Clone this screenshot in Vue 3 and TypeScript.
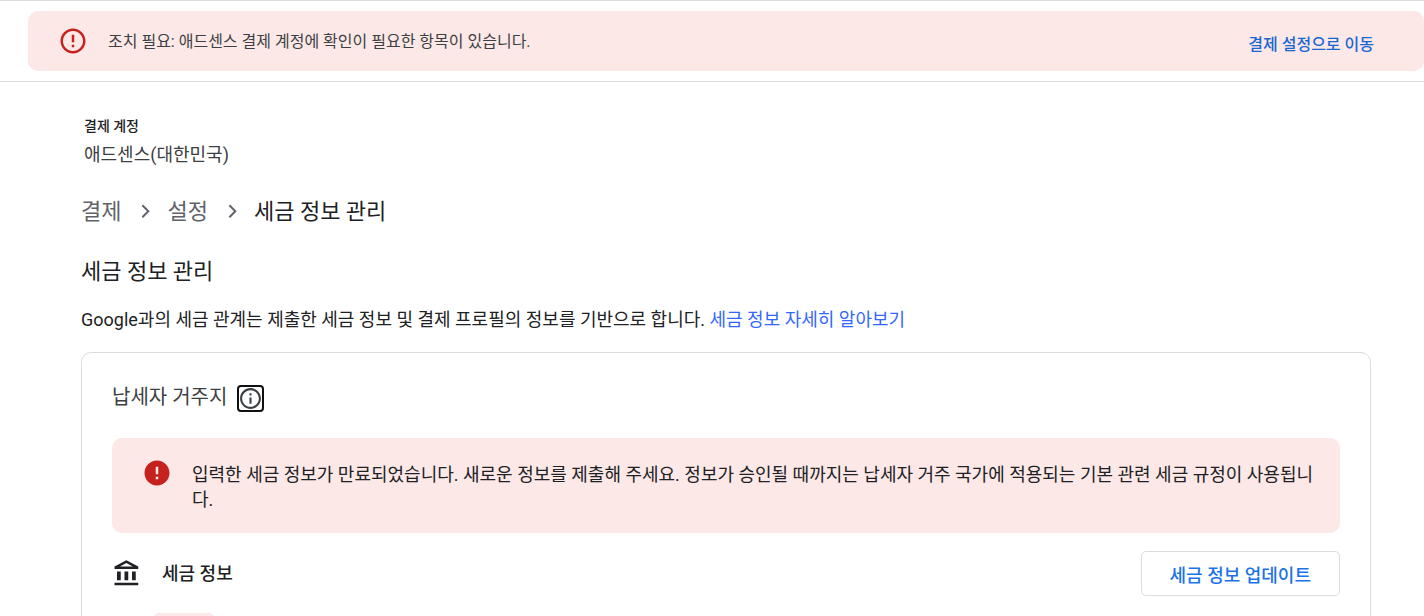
<script setup lang="ts">
const bannerMessage = '조치 필요: 애드센스 결제 계정에 확인이 필요한 항목이 있습니다.'
const account = { label: '결제 계정', name: '애드센스(대한민국)' }
const parents = ['결제', '설정']
const title = '세금 정보 관리'
</script>

<template>
  <div class="page">
    <header class="top">
      <div class="banner" role="alert">
        <svg class="icon" viewBox="0 0 24 24" aria-hidden="true">
          <path d="M11 15h2v2h-2zm0-8h2v6h-2zm.99-5C6.47 2 2 6.48 2 12s4.47 10 9.99 10C17.52 22 22 17.52 22 12S17.52 2 11.99 2zM12 20c-4.42 0-8-3.58-8-8s3.58-8 8-8 8 3.58 8 8-3.58 8-8 8z" />
        </svg>
        <p class="banner-text">{{ bannerMessage }}</p>
        <a class="banner-link" href="#settings">결제 설정으로 이동</a>
      </div>
    </header>

    <main class="content">
      <div class="account">
        <div class="account-label">{{ account.label }}</div>
        <div class="account-name">{{ account.name }}</div>
      </div>

      <nav class="crumbs" aria-label="탐색경로">
        <template v-for="item in parents" :key="item">
          <a class="crumb" href="#">{{ item }}</a>
          <svg class="chevron" viewBox="0 0 24 24" aria-hidden="true">
            <path d="M10.500 5.800 16 11.300 10.500 16.800" />
          </svg>
        </template>
        <span class="current" aria-current="page">{{ title }}</span>
      </nav>

      <h1 class="title">{{ title }}</h1>
      <p class="description">
        Google과의 세금 관계는 제출한 세금 정보 및 결제 프로필의 정보를 기반으로 합니다.
        <a href="#learn">세금 정보 자세히 알아보기</a>
      </p>

      <section class="card">
        <div class="card-head">
          <h2>납세자 거주지</h2>
          <button class="info" type="button" aria-label="정보">
            <svg viewBox="0 0 24 24" aria-hidden="true">
              <path d="M11 7h2v2h-2zm0 4h2v6h-2zm1-9C6.48 2 2 6.48 2 12s4.48 10 10 10 10-4.48 10-10S17.52 2 12 2zm0 18c-4.41 0-8-3.59-8-8s3.59-8 8-8 8 3.59 8 8-3.59 8-8 8z" />
            </svg>
          </button>
        </div>

        <div class="alert" role="alert">
          <svg class="icon" viewBox="0 0 24 24" aria-hidden="true">
            <path d="M12 2C6.48 2 2 6.48 2 12s4.48 10 10 10 10-4.48 10-10S17.52 2 12 2zm1 15h-2v-2h2zm0-4h-2V7h2z" />
          </svg>
          <p>입력한 세금 정보가 만료되었습니다. 새로운 정보를 제출해 주세요. 정보가 승인될 때까지는 납세자 거주 국가에 적용되는 기본 관련 세금 규정이 사용됩니다.</p>
        </div>

        <div class="tax-row">
          <svg class="bank" viewBox="0 0 24 24" aria-hidden="true">
            <path d="M4 10h3v7H4zm6 0h3v7h-3zm6 0h3v7h-3zM2 19h19v2H2zM11.500 3.260 16.710 6H6.290zm0-2.260L2 6v2h19V6z" fill-rule="evenodd" />
          </svg>
          <h3>세금 정보</h3>
          <button class="update" type="button">세금 정보 업데이트</button>
        </div>
        <div class="chip"></div>
      </section>
    </main>
  </div>
</template>

<style>
body {
  margin: 0;
  background: #fff;
}
</style>

<style scoped>
.page {
  height: 100vh;
  overflow: hidden;
  font-family: Roboto, "Noto Sans CJK KR", sans-serif;
  font-size: 18px;
  color: #202124;
}
p, h1, h2, h3 {
  margin: 0;
  font-weight: 400;
}
a {
  text-decoration: none;
}
svg {
  display: block;
  flex: none;
  fill: currentColor;
}
.top {
  padding: 10px 0 10px 28px;
  border-top: 1px solid #dadce0;
  border-bottom: 1px solid #dadce0;
}
.banner {
  display: flex;
  align-items: center;
  height: 60px;
  padding: 0 50px 0 30px;
  border-radius: 10px;
  background: #fce8e6;
}
.icon {
  width: 30px;
  height: 30px;
  color: #c5221f;
}
.banner-text {
  flex: 1;
  margin-left: 20px;
  padding-top: 2px;
  font-size: 16px;
  line-height: 24px;
  color: #3c4043;
}
.banner-link {
  padding-top: 7px;
  font-size: 16px;
  line-height: 24px;
  font-weight: 500;
  color: #1967d2;
}
.content {
  padding: 34px 53px 0 81px;
}
.account {
  padding-left: 3px;
}
.account-label {
  font-size: 14px;
  line-height: 20px;
  font-weight: 500;
}
.account-name {
  margin-top: 6px;
  line-height: 25px;
  color: #3c4043;
}
.crumbs {
  display: flex;
  align-items: center;
  margin-top: 29px;
  font-size: 22px;
  line-height: 32px;
}
.crumb {
  color: #5f6368;
}
.chevron {
  width: 26px;
  height: 26px;
  margin: 0 10px;
  fill: none;
  stroke: #5f6368;
  stroke-width: 1.8;
}
.title {
  margin-top: 28px;
  font-size: 22px;
  line-height: 32px;
}
.description {
  margin-top: 19px;
  line-height: 25px;
}
.description a {
  color: #3367ff;
}
.card {
  margin-top: 20px;
  padding: 30px;
  border: 1px solid #dadce0;
  border-radius: 10px;
}
.card-head {
  display: flex;
  align-items: flex-end;
}
.card-head h2 {
  font-size: 20px;
  line-height: 28px;
  padding-bottom: 1px;
  color: #3c4043;
}
.info {
  width: 27px;
  height: 27px;
  margin-left: 10px;
  padding: 0;
  border: 2px solid #101010;
  border-radius: 4px;
  background: #fff;
  color: #3c4043;
}
.info svg {
  width: 25px;
  height: 25px;
  margin: -1px;
}
.alert {
  display: flex;
  margin-top: 26px;
  padding: 20px 20px 20px 30px;
  border-radius: 10px;
  background: #fce8e6;
}
.alert p {
  flex: 1;
  margin-left: 20px;
  padding: 4px 0 1px;
  line-height: 25px;
}
.tax-row {
  display: flex;
  align-items: center;
  margin-top: 18px;
}
.bank {
  width: 30px;
  height: 30px;
}
.tax-row h3 {
  flex: 1;
  margin-left: 20px;
  font-size: 18px;
  line-height: 25px;
  font-weight: 500;
}
.update {
  height: 45px;
  padding: 0 28px;
  border: 1px solid #dadce0;
  border-radius: 5px;
  background: #fff;
  font-family: inherit;
  font-size: 18px;
  font-weight: 500;
  color: #1a73e8;
}
.chip {
  width: 60px;
  height: 30px;
  margin: 17px 0 0 42px;
  border-radius: 5px;
  background: #fce8e6;
}
</style>
